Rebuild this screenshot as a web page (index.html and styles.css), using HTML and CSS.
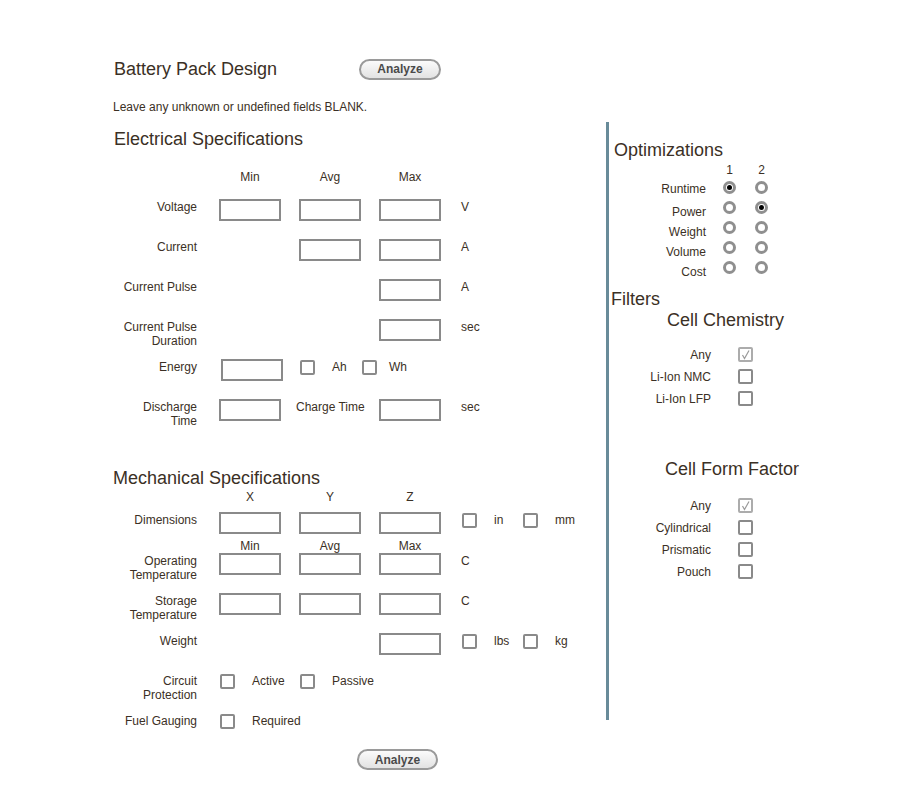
FILE: index.html
```html
<!DOCTYPE html>
<html lang="en">
  <head>
    <meta charset="UTF-8" />
    <title>Battery Pack Design</title>
    <link rel="stylesheet" href="styles.css">
  </head>
  <body>
    <div class="page">
      <div class="main">
        <div class="header">
          <h1>Battery Pack Design</h1>
          <button class="analyze">Analyze</button>
        </div>
        <p class="note">Leave any unknown or undefined fields BLANK.</p>

        <h2 class="elec-title">Electrical Specifications</h2>
        <div class="row heads"><span></span><span>Min</span><span>Avg</span><span>Max</span></div>
        <div class="row">
          <label>Voltage</label>
          <input type="text" /><input type="text" /><input type="text" />
          <span class="unit">V</span>
        </div>
        <div class="row">
          <label>Current</label>
          <span></span><input type="text" /><input type="text" />
          <span class="unit">A</span>
        </div>
        <div class="row">
          <label>Current Pulse</label>
          <span></span><span></span><input type="text" />
          <span class="unit">A</span>
        </div>
        <div class="row">
          <label>Current Pulse Duration</label>
          <span></span><span></span><input type="text" />
          <span class="unit">sec</span>
        </div>
        <div class="row">
          <label>Energy</label>
          <input type="text" class="nudge" />
          <div class="opts wide">
            <div class="opt"><span class="box"></span><span class="txt">Ah</span></div>
            <div class="opt"><span class="box"></span><span class="txt close">Wh</span></div>
          </div>
        </div>
        <div class="row">
          <label>Discharge<br />Time</label>
          <input type="text" />
          <span class="inline-label">Charge Time</span>
          <input type="text" />
          <span class="unit">sec</span>
        </div>

        <h2 class="mech-title">Mechanical Specifications</h2>
        <div class="row heads xyz"><span></span><span>X</span><span>Y</span><span>Z</span></div>
        <div class="row tight">
          <label>Dimensions</label>
          <input type="text" /><input type="text" /><input type="text" />
          <div class="opts units">
            <div class="opt"><span class="box"></span><span class="txt">in</span></div>
            <div class="opt"><span class="box"></span><span class="txt">mm</span></div>
          </div>
        </div>
        <div class="row heads small"><span></span><span>Min</span><span>Avg</span><span>Max</span></div>
        <div class="row">
          <label>Operating Temperature</label>
          <input type="text" /><input type="text" /><input type="text" />
          <span class="unit">C</span>
        </div>
        <div class="row">
          <label>Storage Temperature</label>
          <input type="text" /><input type="text" /><input type="text" />
          <span class="unit">C</span>
        </div>
        <div class="row">
          <label>Weight</label>
          <span></span><span></span><input type="text" />
          <div class="opts units">
            <div class="opt"><span class="box"></span><span class="txt">lbs</span></div>
            <div class="opt"><span class="box"></span><span class="txt">kg</span></div>
          </div>
        </div>
        <div class="row">
          <label>Circuit Protection</label>
          <div class="opt cell"><span class="box"></span><span class="txt">Active</span></div>
          <div class="opt cell"><span class="box"></span><span class="txt">Passive</span></div>
        </div>
        <div class="row last">
          <label>Fuel Gauging</label>
          <div class="opt cell"><span class="box"></span><span class="txt">Required</span></div>
        </div>

        <button class="analyze bottom">Analyze</button>
      </div>

      <div class="side">
        <h2 class="opt-title">Optimizations</h2>
        <div class="radios">
          <span></span><span class="num">1</span><span class="num">2</span>
          <label class="first">Runtime</label><span class="radio on"></span><span class="radio"></span>
          <label>Power</label><span class="radio"></span><span class="radio on"></span>
          <label>Weight</label><span class="radio"></span><span class="radio"></span>
          <label>Volume</label><span class="radio"></span><span class="radio"></span>
          <label>Cost</label><span class="radio"></span><span class="radio"></span>
        </div>

        <h2 class="filters">Filters</h2>
        <h2 class="chem-title">Cell Chemistry</h2>
        <div class="checklist">
          <label>Any</label>
          <span class="box on"><svg viewBox="0 0 11 11" width="11" height="11"><polyline points="2.5,6 4.5,9.5 9,1.5" /></svg></span>
          <label>Li-Ion NMC</label><span class="box"></span>
          <label>Li-Ion LFP</label><span class="box"></span>
        </div>

        <h2 class="form-title">Cell Form Factor</h2>
        <div class="checklist form">
          <label>Any</label>
          <span class="box on"><svg viewBox="0 0 11 11" width="11" height="11"><polyline points="2.5,6 4.5,9.5 9,1.5" /></svg></span>
          <label>Cylindrical</label><span class="box"></span>
          <label>Prismatic</label><span class="box"></span>
          <label>Pouch</label><span class="box"></span>
        </div>
      </div>
    </div>
  </body>
</html>
```

FILE: styles.css
```css
body {
  margin: 0;
  background: #fff;
  color: #3b3025;
  font-family: "Liberation Sans", Arial, sans-serif;
  font-size: 12px;
}
.page {
  display: flex;
  align-items: flex-start;
  padding: 58px 0 0 113px;
}
.main {
  display: flex;
  flex-direction: column;
  width: 493px;
}
h1, h2 {
  margin: 0;
  font-size: 18px;
  font-weight: normal;
  line-height: 22px;
}
.header {
  display: flex;
  align-items: center;
}
.header h1 {
  width: 245px;
  padding-left: 1px;
}
.analyze {
  width: 82px;
  height: 21px;
  padding: 0;
  border: 2px solid #9a9a9a;
  border-radius: 11px;
  background: linear-gradient(#fbfbfb, #e2e2e2);
  color: #4a4a4a;
  font-family: "Liberation Sans", Arial, sans-serif;
  font-size: 12px;
  font-weight: bold;
}
.analyze.bottom {
  align-self: flex-start;
  width: 81px;
  margin: 14px 0 0 244px;
}
.note {
  margin: 20px 0 0;
  line-height: 14px;
}
.elec-title {
  margin-top: 14px;
  padding-left: 1px;
}
.mech-title {
  margin-top: 28px;
}

/* form rows */
.row {
  display: grid;
  grid-template-columns: 88px 62px 62px 62px auto;
  column-gap: 18px;
  height: 22px;
  margin-bottom: 18px;
  align-items: start;
}
.row.last {
  margin-bottom: 0;
}
.row label {
  padding: 1px 4px 0 0;
  text-align: right;
  line-height: 14px;
}
.row input {
  width: 62px;
  height: 22px;
  box-sizing: border-box;
  margin: 0;
  padding: 0;
  border: 2px solid #8a8a8a;
  background: #fff;
}
.row input.nudge {
  margin-left: 2px;
}
.unit {
  padding: 1px 0 0 2px;
  line-height: 14px;
}
.inline-label {
  margin-left: -3px;
  padding-top: 1px;
  line-height: 14px;
  white-space: nowrap;
}
.heads {
  height: 14px;
  margin: 20px 0 15px;
  line-height: 14px;
  text-align: center;
}
.heads.xyz {
  margin: 1px 0 8px;
}
.heads.small {
  height: 13px;
  margin: 0;
  line-height: 13px;
}
.row.tight {
  margin-bottom: 6px;
}

/* checkboxes */
.box {
  display: inline-block;
  flex-shrink: 0;
  width: 15px;
  height: 15px;
  box-sizing: border-box;
  border: 2px solid #8a8a8a;
  border-radius: 2px;
  background: #fff;
}
.box.on {
  border-color: #acacac;
}
.box svg {
  display: block;
  fill: none;
  stroke: #9a9a9a;
  stroke-width: 1.2;
}
.opts {
  display: flex;
}
.opts.wide {
  grid-column: 3 / 6;
  margin-left: 1px;
}
.opts.units {
  margin-left: 3px;
}
.opt {
  display: flex;
  align-items: flex-start;
  white-space: nowrap;
}
.opts .opt {
  width: 62px;
}
.opts.units .opt {
  width: 61px;
}
.opt .box {
  margin-top: 1px;
}
.opt .txt {
  margin-left: 17px;
  padding-top: 1px;
  line-height: 14px;
}
.opt .txt.close {
  margin-left: 12px;
}
.opt.cell {
  margin-left: 1px;
}

/* right column */
.side {
  width: 280px;
  height: 598px;
  margin-top: 64px;
  padding-left: 2px;
  border-left: 3px solid #688b99;
}
.opt-title {
  margin: 17px 0 0 3px;
}
.radios {
  display: grid;
  grid-template-columns: 112px 32px 13px;
  grid-auto-rows: 20px;
  grid-template-rows: 15px;
  margin-top: 2px;
}
.radios label {
  padding: 7px 17px 0 0;
  text-align: right;
  line-height: 14px;
}
.radios label.first {
  padding-top: 4px;
}
.num {
  width: 13px;
  text-align: center;
  line-height: 14px;
}
.radio {
  position: relative;
  width: 13px;
  height: 13px;
  margin-top: 3px;
  box-sizing: border-box;
  border: 3px solid #8f8f8f;
  border-radius: 50%;
  background: #fff;
}
.radio.on::after {
  content: "";
  position: absolute;
  top: 1px;
  left: 1px;
  width: 5px;
  height: 5px;
  border-radius: 50%;
  background: #000;
}
.filters {
  margin-top: 11px;
  line-height: 20px;
}
.chem-title {
  margin-left: 56px;
}
.form-title {
  margin: 48px 0 0 54px;
}
.checklist {
  display: grid;
  grid-template-columns: 127px 15px;
  grid-auto-rows: 22px;
  margin-top: 13px;
}
.checklist.form {
  margin-top: 15px;
}
.checklist label {
  padding: 4px 27px 0 0;
  text-align: right;
  line-height: 14px;
}
.checklist .box {
  margin-top: 3px;
}
```
